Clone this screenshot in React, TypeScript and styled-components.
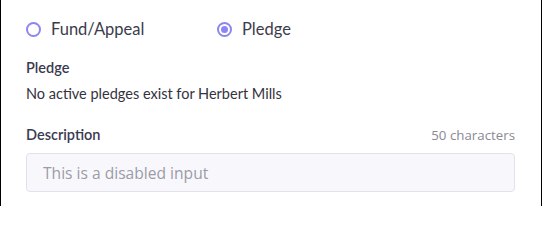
import styled, { createGlobalStyle } from "styled-components";

const GlobalStyle = createGlobalStyle`
  html, body {
    margin: 0;
    padding: 0;
    background: #ffffff;
  }
`;

const options = [
  { id: "fund", label: "Fund/Appeal" },
  { id: "pledge", label: "Pledge" },
];

export default function App() {
  const selected = "pledge";

  return (
    <>
      <GlobalStyle />
      <Frame>
        <RadioGroup>
          {options.map((o) => (
            <RadioOption key={o.id}>
              <RadioCircle $checked={o.id === selected} />
              <RadioLabel>{o.label}</RadioLabel>
            </RadioOption>
          ))}
        </RadioGroup>

        <Section>
          <FieldLabel>Pledge</FieldLabel>
          <Message>No active pledges exist for Herbert Mills</Message>
        </Section>

        <Field>
          <FieldHeader>
            <FieldLabel>Description</FieldLabel>
            <Counter>50 characters</Counter>
          </FieldHeader>
          <Input disabled placeholder="This is a disabled input" />
        </Field>
      </Frame>
    </>
  );
}

const Frame = styled.div`
  box-sizing: border-box;
  width: 542px;
  height: 206px;
  border-left: 1px solid #000;
  border-right: 1px solid #000;
  padding: 18px 26px 0 25px;
  font-family: "Lato", "Liberation Sans", sans-serif;
  display: flex;
  flex-direction: column;
`;

const RadioGroup = styled.div`
  display: grid;
  grid-template-columns: 191px auto;
  height: 22px;
  align-items: center;
`;

const RadioOption = styled.label`
  display: flex;
  align-items: center;
  gap: 10px;
`;

const RadioCircle = styled.span<{ $checked: boolean }>`
  box-sizing: border-box;
  width: 15px;
  height: 15px;
  border-radius: 50%;
  border: 2px solid #8d86f2;
  display: flex;
  align-items: center;
  justify-content: center;

  &::after {
    content: "";
    display: ${(p) => (p.$checked ? "block" : "none")};
    width: 7px;
    height: 7px;
    border-radius: 50%;
    background: #8d86f2;
  }
`;

const RadioLabel = styled.span`
  font-size: 16.5px;
  line-height: 22px;
  color: #3c3b4c;
`;

const Section = styled.div`
  margin-top: 19px;
  display: flex;
  flex-direction: column;
  gap: 8px;
`;

const FieldLabel = styled.span`
  font-size: 14.5px;
  line-height: 18px;
  font-weight: 600;
  color: #3b3a50;
`;

const Message = styled.span`
  font-size: 14.5px;
  line-height: 18px;
  color: #333340;
`;

const Field = styled.div`
  margin-top: 23px;
  display: flex;
  flex-direction: column;
  gap: 9px;
`;

const FieldHeader = styled.div`
  display: flex;
  justify-content: space-between;
  align-items: baseline;
`;

const Counter = styled.span`
  font-family: "Open Sans", "Noto Sans", sans-serif;
  font-size: 13.3px;
  line-height: 18px;
  color: #8a8a94;
`;

const Input = styled.input`
  box-sizing: border-box;
  width: 100%;
  height: 39px;
  padding: 0 16px;
  border: 1px solid #e3e2ec;
  border-radius: 4px;
  background: #f8f8fc;
  font-family: "Open Sans", "Noto Sans", sans-serif;
  font-size: 15.6px;
  outline: none;

  &::placeholder {
    color: #9c9ba8;
  }
`;
